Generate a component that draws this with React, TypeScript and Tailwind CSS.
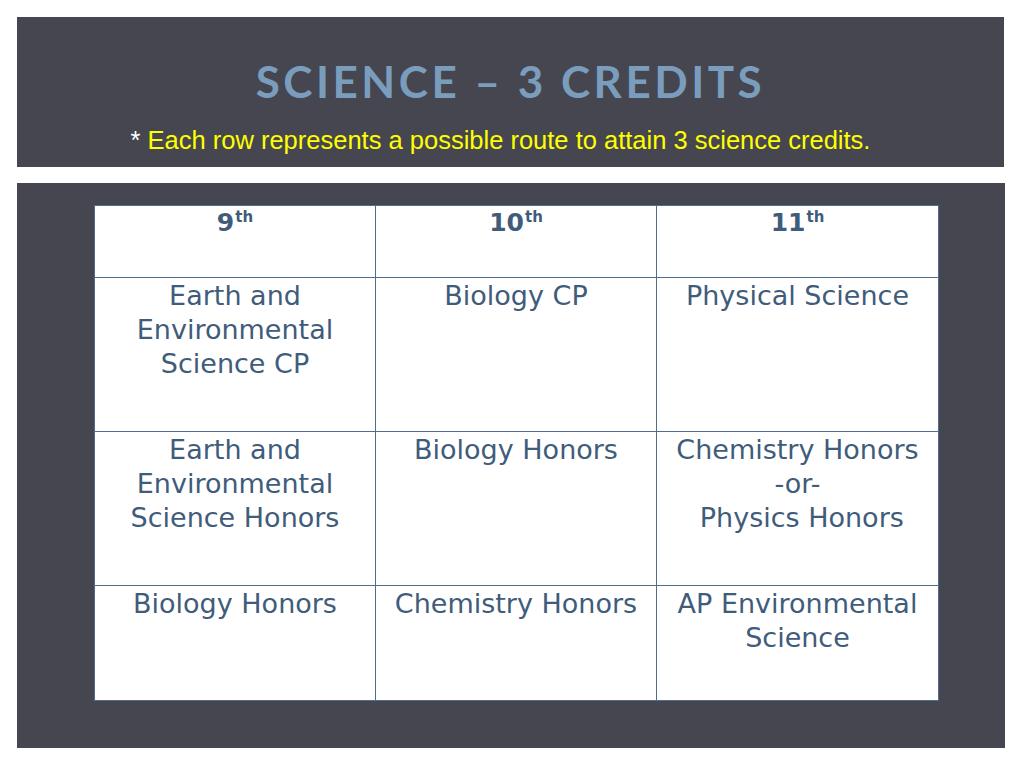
const rows: string[][][] = [
  [["Earth and", "Environmental", "Science CP"], ["Biology CP"], ["Physical Science"]],
  [["Earth and", "Environmental", "Science Honors"], ["Biology Honors"], ["Chemistry Honors", "-or-", " Physics Honors"]],
  [["Biology Honors"], ["Chemistry Honors"], ["AP Environmental", "Science"]],
];

const heights = ["h-[154px]", "h-[154px]", "h-[115px]"];

export default function App() {
  return (
    <div className="w-[1024px] h-[768px] bg-white pt-[17px] pl-[17px] font-['DejaVu_Sans',sans-serif]">
      <div className="w-[987px] h-[150px] bg-[#464650] flex flex-col items-center">
        <h1 className="mt-[38px] text-[44px] leading-[52px] font-bold tracking-[0.08em] text-[#7b9dbd] font-['Lato',sans-serif]">
          SCIENCE – 3 CREDITS
        </h1>
        <p className="mt-[18px] mr-[20px] text-[25.5px] leading-[30px] font-['Liberation_Sans',Arial,sans-serif] text-[#ffff00]">
          <span className="text-white">*</span> Each row represents a possible route to attain 3 science credits.
        </p>
      </div>
      <div className="mt-[16px] w-[988px] h-[565px] bg-[#464650] pt-[22px] pl-[77px]">
        <div className="w-[845px] bg-white border-[1.5px] border-[#4f6d8c] text-[#3f5c7a]">
          <div className="grid grid-cols-3 h-[71px]">
            {["9", "10", "11"].map((n, i) => (
              <div key={n} className={`text-center pt-[2px] text-[25px] font-bold leading-[30px] ${i < 2 ? "border-r-[1.5px] border-[#4f6d8c]" : ""}`}>
                {n}
                <span className="inline-block align-top text-[15px] leading-[18px] ml-[1px]">th</span>
              </div>
            ))}
          </div>
          {rows.map((row, r) => (
            <div key={r} className={`grid grid-cols-3 border-t-[1.5px] border-[#4f6d8c] ${heights[r]}`}>
              {row.map((cell, i) => (
                <div key={i} className={`text-center pt-[1px] text-[27px] leading-[34px] whitespace-pre ${i < 2 ? "border-r-[1.5px] border-[#4f6d8c]" : ""}`}>
                  {cell.map((l, k) => (
                    <div key={k}>{l}</div>
                  ))}
                </div>
              ))}
            </div>
          ))}
        </div>
      </div>
    </div>
  );
}
